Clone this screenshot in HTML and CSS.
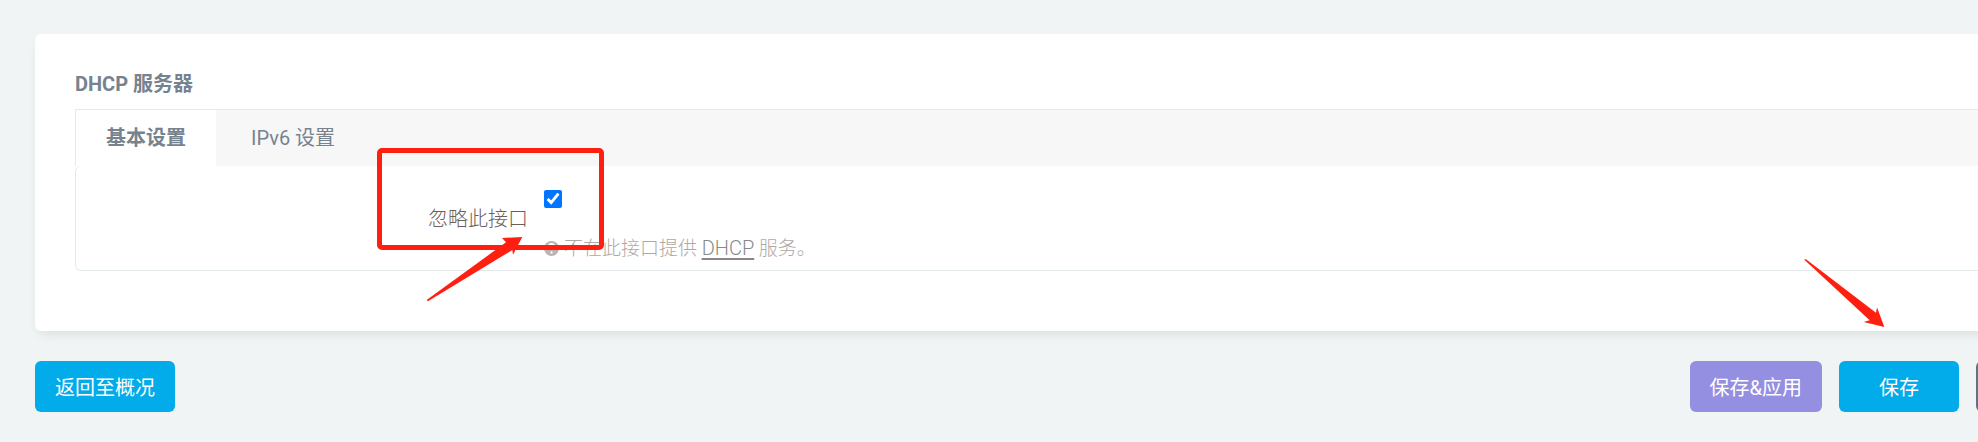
FILE: index.html
```html
<!DOCTYPE html>
<html lang="zh-CN">
<head>
<meta charset="utf-8">
<title>DHCP 服务器</title>
<link rel="stylesheet" href="styles.css">
</head>
<body>
<main class="page">
  <section class="card">
    <h1 class="card-title">DHCP 服务器</h1>
    <nav class="tabs">
      <a class="tab tab-active" href="#general">基本设置</a>
      <a class="tab" href="#ipv6">IPv6 设置</a>
    </nav>
    <div class="panel" id="general">
      <label class="field-label" for="ignore">忽略此接口</label>
      <div class="field">
        <input class="field-check" type="checkbox" id="ignore" checked>
        <p class="hint">
          <svg class="hint-icon" viewBox="0 0 15 15" aria-hidden="true">
            <circle cx="7.5" cy="7.5" r="7.5" fill="currentColor"/>
            <path d="M4.8 5.7C4.8 2 10.2 2 10.2 5.4C10.2 7.3 7.5 7.2 7.5 9M7.5 10.5V12.5" fill="none" stroke="#fff" stroke-width="2"/>
          </svg>
          <span>不在此接口提供 <a class="hint-link" href="#dhcp">DHCP</a> 服务。</span>
        </p>
      </div>
    </div>
  </section>
  <footer class="actions">
    <button class="btn btn-primary" type="button">返回至概况</button>
    <div class="actions-end">
      <button class="btn btn-apply" type="button">保存&amp;应用</button>
      <button class="btn btn-primary btn-wide" type="button">保存</button>
      <button class="btn btn-reset btn-wide" type="reset"></button>
    </div>
  </footer>
</main>
<div class="mark-box"></div>
<svg class="mark-arrow mark-arrow-field" viewBox="195 320 297 201" aria-hidden="true">
  <path d="M200 512L438 339L426 326L487 323L459 376L457 362L204 516Z"/>
</svg>
<svg class="mark-arrow mark-arrow-save" viewBox="429 56 249 213" aria-hidden="true">
  <path d="M433 61L437 59L648 220L651 204L673 263L611 248L629 243Z"/>
</svg>
</body>
</html>
```
FILE: styles.css
```css
* {
  box-sizing: border-box;
}

body {
  margin: 0;
  overflow: hidden;
  background: #f0f4f5;
  font-family: Roboto, "Noto Sans CJK SC", sans-serif;
  font-size: 20px;
  line-height: 30px;
  color: #76838f;
}

.page {
  margin-right: -118px;
  padding: 34px 0 24px 35px;
}

.card {
  padding: 35px 40px 60px;
  border-radius: 6px;
  background: #fff;
  box-shadow: 0 6px 12px -4px rgba(0, 0, 0, 0.1);
}

.card-title {
  margin: 0 0 10px;
  font-size: 20px;
  font-weight: 700;
  line-height: 30px;
}

.tabs {
  display: flex;
  border: 1px solid #e4e9eb;
  border-bottom: 0;
  background: #f7f7f7;
}

.tab {
  padding: 13px 35px;
  color: inherit;
  text-decoration: none;
}

.tab-active {
  padding: 13px 30px;
  background: #fff;
  font-weight: 700;
}

.panel {
  display: flex;
  gap: 16px;
  padding: 24px 0 6px;
  border: 1px solid #e4e9eb;
  border-top: 0;
  border-radius: 6px;
}

.field-label {
  width: 452px;
  padding-top: 14px;
  text-align: right;
  font-weight: 300;
  color: #6b605c;
}

.field-check {
  display: block;
  width: 18px;
  height: 18px;
  margin: 0 0 25px;
  accent-color: #0075ff;
}

.hint {
  display: flex;
  align-items: center;
  gap: 5px;
  margin: 0;
  font-size: 19px;
  font-weight: 300;
  color: #b0a8a5;
}

.hint-icon {
  width: 15px;
  height: 15px;
  color: #bbb3b1;
}

.hint-link {
  color: #888;
  font-size: 20px;
  text-underline-offset: 3px;
}

.actions {
  display: flex;
  justify-content: space-between;
  margin-top: 30px;
}

.actions-end {
  display: flex;
  gap: 17px;
}

.btn {
  height: 51px;
  padding: 2px 20px 0;
  border: 0;
  border-radius: 6px;
  font: inherit;
  color: #fff;
}

.btn-primary {
  background: #02abea;
}

.btn-apply {
  background: #958fe1;
}

.btn-reset {
  background: #627286;
}

.btn-wide {
  width: 120px;
}

.mark-box {
  position: absolute;
  top: 148px;
  left: 377px;
  width: 227px;
  height: 102px;
  border: 5px solid #ff1f10;
  border-radius: 5px;
}

.mark-arrow {
  position: absolute;
  fill: #ff1f10;
}

.mark-arrow-field {
  top: 236px;
  left: 425px;
  width: 99px;
}

.mark-arrow-save {
  top: 258px;
  right: 92px;
  width: 83px;
}
```
